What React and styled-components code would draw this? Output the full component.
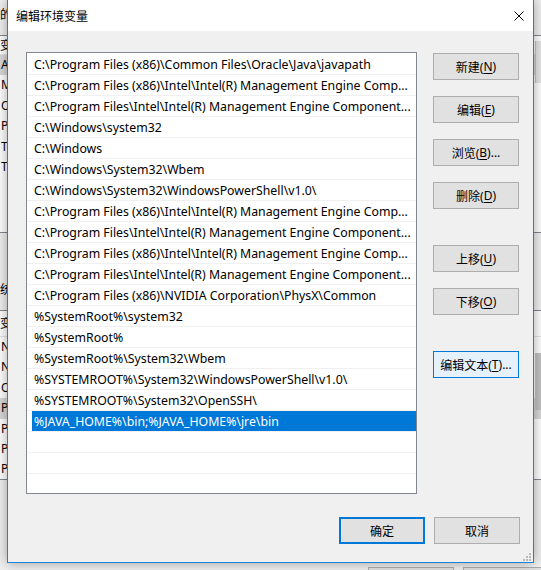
import React from 'react';
import styled, { createGlobalStyle } from 'styled-components';

const GlobalStyle = createGlobalStyle`
  html, body {
    margin: 0;
    padding: 0;
    overflow: hidden;
    background: #f0f0f0;
  }
  body {
    font-family: "Noto Sans", "Noto Sans CJK SC", sans-serif;
    font-size: 12px;
    color: #000;
  }
`;

const paths = [
  'C:\\Program Files (x86)\\Common Files\\Oracle\\Java\\javapath',
  'C:\\Program Files (x86)\\Intel\\Intel(R) Management Engine Comp...',
  'C:\\Program Files\\Intel\\Intel(R) Management Engine Component...',
  'C:\\Windows\\system32',
  'C:\\Windows',
  'C:\\Windows\\System32\\Wbem',
  'C:\\Windows\\System32\\WindowsPowerShell\\v1.0\\',
  'C:\\Program Files (x86)\\Intel\\Intel(R) Management Engine Comp...',
  'C:\\Program Files\\Intel\\Intel(R) Management Engine Component...',
  'C:\\Program Files (x86)\\Intel\\Intel(R) Management Engine Comp...',
  'C:\\Program Files\\Intel\\Intel(R) Management Engine Component...',
  'C:\\Program Files (x86)\\NVIDIA Corporation\\PhysX\\Common',
  '%SystemRoot%\\system32',
  '%SystemRoot%',
  '%SystemRoot%\\System32\\Wbem',
  '%SYSTEMROOT%\\System32\\WindowsPowerShell\\v1.0\\',
  '%SYSTEMROOT%\\System32\\OpenSSH\\',
  '%JAVA_HOME%\\bin;%JAVA_HOME%\\jre\\bin',
  '',
  '',
  '',
];

// only what peeks out of the parent window from behind the dialog
const userVars = ['A', 'M', 'O', 'Pa', 'TE', 'TM'];
const systemVars = ['N', 'N', 'O', 'Pa', 'PA', 'PR', 'PR'];

const sideButtons = [
  { label: '新建', key: 'N' },
  { label: '编辑', key: 'E' },
  { label: '浏览', key: 'B', dots: true },
  { label: '删除', key: 'D' },
  { label: '上移', key: 'U', spaced: true },
  { label: '下移', key: 'O' },
  { label: '编辑文本', key: 'T', dots: true, spaced: true, hover: true },
];

const App = () => {
  return (
    <>
      <GlobalStyle />
      <Desktop>
        {/* parent "环境变量" window, mostly hidden behind the dialog */}
        <ParentWindow>
          <ParentLabel>的</ParentLabel>
          <ParentList $height={198}>
            <ParentHeader $h={19}>变</ParentHeader>
            {userVars.map((v, i) => (
              <ParentRow key={i} $active={i === 0}>{v}</ParentRow>
            ))}
            <ScrollThumb $top={5} $height={42} />
          </ParentList>
          <ParentLabel $top={49}>统</ParentLabel>
          <ParentList $height={170}>
            <ParentHeader $h={26}>变</ParentHeader>
            {systemVars.map((v, i) => (
              <ParentRow key={i} $active={i === 3}>{v}</ParentRow>
            ))}
            <ScrollThumb $top={42} $height={57} $dark />
          </ParentList>
          <ParentFooter>
            <ParentButton />
            <ParentButton />
          </ParentFooter>
        </ParentWindow>

        <Dialog>
          <TitleBar>
            <Title>编辑环境变量</Title>
            <CloseButton>
              <svg width="10" height="10" viewBox="0 0 10 10">
                <path d="M0.5 0.5 L9.5 9.5 M9.5 0.5 L0.5 9.5" stroke="#000" strokeWidth="1" />
              </svg>
            </CloseButton>
          </TitleBar>
          <Body>
            <Main>
              <PathList>
                {paths.map((p, i) => (
                  <PathRow key={i}>
                    <PathCell $selected={i === 17}>{p}</PathCell>
                  </PathRow>
                ))}
              </PathList>
              <SideColumn>
                {sideButtons.map((b) => (
                  <Button key={b.label} $spaced={b.spaced} $hover={b.hover}>
                    {b.label}(<u>{b.key}</u>){b.dots ? '...' : ''}
                  </Button>
                ))}
              </SideColumn>
            </Main>
            <Footer>
              <Button $default>确定</Button>
              <Button>取消</Button>
            </Footer>
          </Body>
          <SizeGrip width="8" height="8" viewBox="0 0 8 8">
            <rect x="6" y="0" width="2" height="2" fill="#b9b9b9" />
            <rect x="3" y="3" width="2" height="2" fill="#b9b9b9" />
            <rect x="6" y="3" width="2" height="2" fill="#b9b9b9" />
            <rect x="0" y="6" width="2" height="2" fill="#b9b9b9" />
            <rect x="3" y="6" width="2" height="2" fill="#b9b9b9" />
            <rect x="6" y="6" width="2" height="2" fill="#b9b9b9" />
          </SizeGrip>
        </Dialog>
      </Desktop>
    </>
  );
};

// Desktop + parent window
const Desktop = styled.div`
  position: relative;
  width: 541px;
  height: 570px;
  overflow: hidden;
`;

const ParentWindow = styled.div`
  position: absolute;
  left: -40px;
  top: 0;
  width: 600px;
  height: 600px;
  box-sizing: border-box;
  padding: 7px 8px 6px 10px;
  background: #f0f0f0;
  display: flex;
  flex-direction: column;
`;

const ParentLabel = styled.div`
  line-height: 16px;
  height: 16px;
  padding-left: 30px;
  margin-top: ${(p) => p.$top || 0}px;
  margin-bottom: 12px;
`;

const ParentList = styled.div`
  position: relative;
  height: ${(p) => p.$height}px;
  box-sizing: border-box;
  border: 1px solid #828790;
  background: #fff;
  overflow: hidden;
`;

const ParentHeader = styled.div`
  height: ${(p) => p.$h}px;
  line-height: ${(p) => p.$h}px;
  padding-left: 29px;
  border-bottom: 1px solid #e5e5e5;
  box-sizing: border-box;
`;

const ParentRow = styled.div`
  height: 20.4px;
  line-height: 20px;
  padding-left: 30px;
  background: ${(p) => (p.$active ? '#d9d9d9' : 'transparent')};
`;

const ScrollThumb = styled.div`
  position: absolute;
  right: 2px;
  top: ${(p) => p.$top}px;
  width: 13px;
  height: ${(p) => p.$height}px;
  background: ${(p) => (p.$dark ? '#c2c2c2' : '#e6e6e6')};
  border-left: 1px solid #c8c8c8;
`;

const ParentFooter = styled.div`
  margin-top: auto;
  display: flex;
  justify-content: flex-end;
  gap: 9px;
  padding-right: 3px;
`;

const ParentButton = styled.div`
  width: 86px;
  height: 27px;
  box-sizing: border-box;
  border: 1px solid #adadad;
  background: #e1e1e1;
`;

// Dialog
const Dialog = styled.div`
  position: absolute;
  left: 7px;
  top: -1px;
  width: 527px;
  height: 564px;
  box-sizing: border-box;
  border: 1px solid #1883d7;
  background: #f0f0f0;
  box-shadow: 0 0 12px rgba(0, 0, 0, 0.35);
  display: flex;
  flex-direction: column;
`;

const TitleBar = styled.div`
  height: 31px;
  flex: none;
  background: #fff;
  display: flex;
  align-items: center;
  padding-left: 8px;
`;

const Title = styled.div`
  font-family: "Noto Sans CJK SC", sans-serif;
  font-size: 12px;
  flex: 1;
`;

const CloseButton = styled.div`
  width: 28px;
  display: flex;
  align-items: center;
  justify-content: center;
`;

const Body = styled.div`
  flex: 1;
  display: flex;
  flex-direction: column;
  padding: 21px 13px 0 18px;
`;

const Main = styled.div`
  display: flex;
  gap: 16px;
`;

const PathList = styled.div`
  width: 391px;
  height: 442px;
  box-sizing: border-box;
  border: 1px solid #828790;
  background: #fff;
  padding-top: 1px;
  overflow: hidden;
`;

const PathRow = styled.div`
  height: 21px;
  box-sizing: border-box;
  border-bottom: 1px solid #f0f0f0;
  display: flex;
  padding-left: 5px;
`;

const PathCell = styled.div`
  flex: 1;
  padding-left: 2px;
  line-height: 21px;
  height: 20px;
  font-size: 12.3px;
  white-space: nowrap;
  overflow: hidden;
  background: ${(p) => (p.$selected ? '#0078d7' : 'transparent')};
  color: ${(p) => (p.$selected ? '#fff' : '#000')};
`;

const SideColumn = styled.div`
  display: flex;
  flex-direction: column;
  gap: 16px;
  margin-top: 1px;
`;

const Button = styled.div`
  width: 86px;
  height: 27px;
  flex: none;
  box-sizing: border-box;
  margin-top: ${(p) => (p.$spaced ? '20px' : '0')};
  border: ${(p) => (p.$default ? '2px solid #0078d7' : p.$hover ? '1px solid #0078d7' : '1px solid #adadad')};
  background: ${(p) => (p.$hover ? '#e5f1fb' : '#e1e1e1')};
  display: flex;
  align-items: center;
  justify-content: center;
  white-space: nowrap;
  font-size: 12px;

  u {
    text-underline-offset: 2px;
  }
`;

const Footer = styled.div`
  margin-top: 23px;
  display: flex;
  justify-content: flex-end;
  gap: 9px;
`;

const SizeGrip = styled.svg`
  position: absolute;
  right: 2px;
  bottom: 1px;
`;

export default App;
